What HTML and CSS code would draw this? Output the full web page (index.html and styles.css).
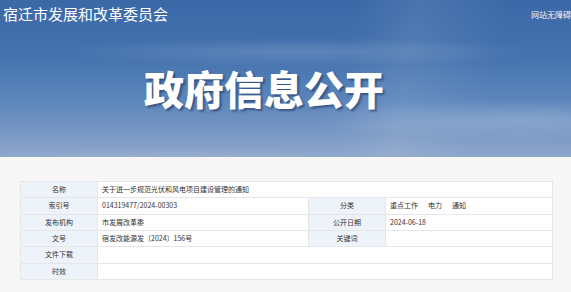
FILE: index.html
```html
<!DOCTYPE html>
<html lang="zh-CN">
<head>
<meta charset="utf-8">
<title>政府信息公开</title>
<link rel="stylesheet" href="styles.css">
</head>
<body>
<header class="banner">
  <div class="swoosh"></div>
  <div class="topbar">
    <span class="site">宿迁市发展和改革委员会</span>
    <span class="access">网站无障碍</span>
  </div>
  <h1 class="title">政府信息公开</h1>
</header>
<main class="content">
  <table class="info">
    <colgroup>
      <col class="c-label"><col class="c-val1"><col class="c-label"><col class="c-val2">
    </colgroup>
    <tr><th>名称</th><td colspan="3">关于进一步规范光伏和风电项目建设管理的通知</td></tr>
    <tr><th>索引号</th><td>014319477/2024-00303</td><th>分类</th><td><span class="tag">重点工作</span><span class="tag">电力</span><span class="tag">通知</span></td></tr>
    <tr><th>发布机构</th><td>市发展改革委</td><th>公开日期</th><td>2024-06-18</td></tr>
    <tr><th>文号</th><td>宿发改能源发〔2024〕156号</td><th>关键词</th><td></td></tr>
    <tr><th>文件下载</th><td colspan="3"></td></tr>
    <tr><th>时效</th><td colspan="3"></td></tr>
  </table>
</main>
</body>
</html>
```
FILE: styles.css
```css
html, body {
  margin: 0;
  padding: 0;
  background: #f7f7f7;
  font-family: "Noto Sans CJK SC", "Noto Sans", sans-serif;
}
.banner {
  position: relative;
  height: 157px;
  overflow: hidden;
  background: linear-gradient(180deg, #3b69a8 0%, #4472ae 35%, #5d86bc 65%, #8ea6cb 100%);
  display: flex;
  flex-direction: column;
}
.swoosh {
  position: absolute;
  inset: 0;
  background:
    radial-gradient(ellipse 420px 40px at 180px 175px, rgba(255,255,255,0.28), rgba(255,255,255,0) 70%),
    radial-gradient(ellipse 300px 30px at 520px 120px, rgba(255,255,255,0.18), rgba(255,255,255,0) 70%),
    radial-gradient(ellipse 360px 20px at 300px 52px, rgba(255,255,255,0.14), rgba(255,255,255,0) 70%),
    linear-gradient(100deg, rgba(255,255,255,0) 60%, rgba(255,255,255,0.08) 70%, rgba(255,255,255,0) 85%);
}
.topbar {
  position: relative;
  display: flex;
  justify-content: space-between;
  align-items: flex-start;
  padding: 3px 0 0 3px;
  height: 30px;
}
.site {
  color: #fff;
  font-size: 15px;
  line-height: 22px;
}
.access {
  color: #eef3fa;
  font-size: 8px;
  line-height: 24px;
  white-space: nowrap;
}
.title {
  position: relative;
  margin: 31px 0 0 144px;
  color: #fff;
  font-size: 40px;
  font-weight: 900;
  line-height: 48px;
  text-shadow: 2px 2px 2px rgba(20, 40, 80, 0.5);
}
.content {
  padding: 24px 0 0 20px;
}
.info {
  width: 532px;
  border-collapse: collapse;
  table-layout: fixed;
  background: #fff;
  font-size: 7px;
  color: #333;
}
.c-label { width: 77px; }
.c-val1 { width: 211px; }
.c-val2 { width: 167px; }
.info th, .info td {
  border: 1px solid #e4e6ea;
  height: 15.33px;
  padding: 0 4px;
  line-height: 15px;
  white-space: nowrap;
}
.info th {
  background: #eef3fa;
  font-weight: normal;
  text-align: center;
}
.info td {
  text-align: left;
}
.tag {
  margin-right: 10px;
}
```
